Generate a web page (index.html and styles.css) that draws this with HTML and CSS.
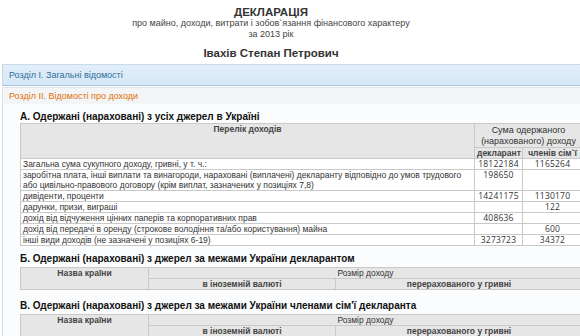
FILE: index.html
```html
<!DOCTYPE html>
<html lang="uk">
<head>
<meta charset="utf-8">
<title>Декларація</title>
<link rel="stylesheet" href="styles.css">
</head>
<body>
<div class="head">
  <h1 class="title">ДЕКЛАРАЦІЯ</h1>
  <div class="sub">про майно, доходи, витрати і зобов`язання фінансового характеру</div>
  <div class="sub">за 2013 рік</div>
  <h2 class="name">Івахів Степан Петрович</h2>
</div>
<div class="accordion">
  <div class="acc-h acc-default">Розділ І. Загальні відомості</div>
  <div class="acc-h acc-active">Розділ ІІ. Відомості про доходи</div>
  <div class="acc-body">
    <h3 class="sec sec-a">А. Одержані (нараховані) з усіх джерел в Україні</h3>
    <table class="t tA">
      <colgroup><col class="cA1"><col class="cA2"><col class="cA3"></colgroup>
      <tr>
        <th rowspan="2" class="top bold">Перелік доходів</th>
        <th colspan="2" class="sum">Сума одержаного (нарахованого) доходу</th>
      </tr>
      <tr><th class="bold">декларант</th><th class="bold">членів сім`ї</th></tr>
      <tr><td>Загальна сума сукупного доходу, гривні, у т. ч.:</td><td class="n">18122184</td><td class="n">1165264</td></tr>
      <tr><td>заробітна плата, інші виплати та винагороди, нараховані (виплачені) декларанту відповідно до умов трудового або цивільно-правового договору (крім виплат, зазначених у позиціях 7,8)</td><td class="n">198650</td><td class="n"></td></tr>
      <tr><td>дивіденти, проценти</td><td class="n">14241175</td><td class="n">1130170</td></tr>
      <tr><td>дарунки, призи, виграші</td><td class="n"></td><td class="n">122</td></tr>
      <tr><td>дохід від відчуження цінних паперів та корпоративних прав</td><td class="n">408636</td><td class="n"></td></tr>
      <tr><td>дохід від передачі в оренду (строкове володіння та/або користування) майна</td><td class="n"></td><td class="n">600</td></tr>
      <tr><td>інші види доходів (не зазначені у позиціях 6-19)</td><td class="n">3273723</td><td class="n">34372</td></tr>
    </table>

    <h3 class="sec sec-b">Б. Одержані (нараховані) з джерел за межами України декларантом</h3>
    <table class="t tB">
      <colgroup><col class="cB1"><col class="cB2"><col class="cB3"></colgroup>
      <tr><th rowspan="2" class="top bold">Назва країни</th><th colspan="2">Розмір доходу</th></tr>
      <tr><th class="bold">в іноземній валюті</th><th class="bold">перерахованого у гривні</th></tr>
    </table>

    <h3 class="sec sec-b">В. Одержані (нараховані) з джерел за межами України членами сім'ї декларанта</h3>
    <table class="t tB">
      <colgroup><col class="cB1"><col class="cB2"><col class="cB3"></colgroup>
      <tr><th rowspan="2" class="top bold">Назва країни</th><th colspan="2">Розмір доходу</th></tr>
      <tr><th class="bold">в іноземній валюті</th><th class="bold">перерахованого у гривні</th></tr>
    </table>
  </div>
</div>
</body>
</html>
```
FILE: styles.css
```css
html, body {
  margin: 0;
  padding: 0;
  background: #ffffff;
  overflow: hidden;
}
body {
  width: 580px;
  height: 336px;
  font-family: "Liberation Sans", Arial, sans-serif;
  color: #333;
}
.head {
  width: 542px;
  text-align: center;
  padding-top: 6px;
}
.title {
  margin: 0;
  font-size: 11.5px;
  line-height: 12px;
  font-weight: bold;
  color: #333;
}
.sub {
  font-size: 9px;
  line-height: 11px;
  color: #444;
}
.name {
  margin: 7px 0 0;
  font-size: 11.5px;
  line-height: 13px;
  font-weight: bold;
  color: #333;
}
.accordion {
  margin: 4px 0 0 2px;
  width: 600px;
}
.acc-h {
  font-size: 9px;
  padding-left: 6px;
  border: 1px solid #c5dbec;
}
.acc-default {
  height: 20px;
  line-height: 20px;
  color: #2e6e9e;
  background: linear-gradient(#e2eef9, #d7e7f6);
  border-bottom-color: #a6c2dc;
}
.acc-active {
  margin-top: 1px;
  height: 16px;
  line-height: 16px;
  color: #e17009;
  background: #f3f5f6;
  border-color: #dde6ec;
  border-bottom: none;
}
.acc-body {
  border-left: 1px solid #d3dee6;
  background: #fafcfd;
  padding: 7px 0 0 17px;
  height: 240px;
}
.sec {
  margin: 0;
  font-size: 10px;
  line-height: 12px;
  font-weight: bold;
  color: #111;
}
.sec-a { margin-bottom: 0; }
.sec-b { margin: 2px 0 2px; }
.t {
  border-collapse: collapse;
  table-layout: fixed;
  width: 562px;
  font-size: 8.5px;
  color: #333;
}
.t th, .t td {
  border: 1px solid #c9c9c9;
  padding: 0 2px;
  line-height: 10px;
}
.t th {
  background: #e6e6e6;
  font-weight: normal;
  text-align: center;
  vertical-align: top;
}
.t th.bold { font-weight: bold; color: #444; }
.t th.sum { font-size: 9px; line-height: 11px; padding: 1px 2px 0; }
.t td { background: #ffffff; vertical-align: top; }
.t td.n {
  text-align: center;
  font-family: "Open Sans", sans-serif;
  font-size: 8.5px;
  letter-spacing: 0.2px;
}
.cA1 { width: 454px; }
.cA2 { width: 48px; }
.cA3 { width: 60px; }
.tA { margin: 0 0 7px; }
.tB { margin: 0 0 10px; }
.tB th { height: 10px; }
.cB1 { width: 128px; }
.cB2 { width: 187px; }
.cB3 { width: 247px; }
```
